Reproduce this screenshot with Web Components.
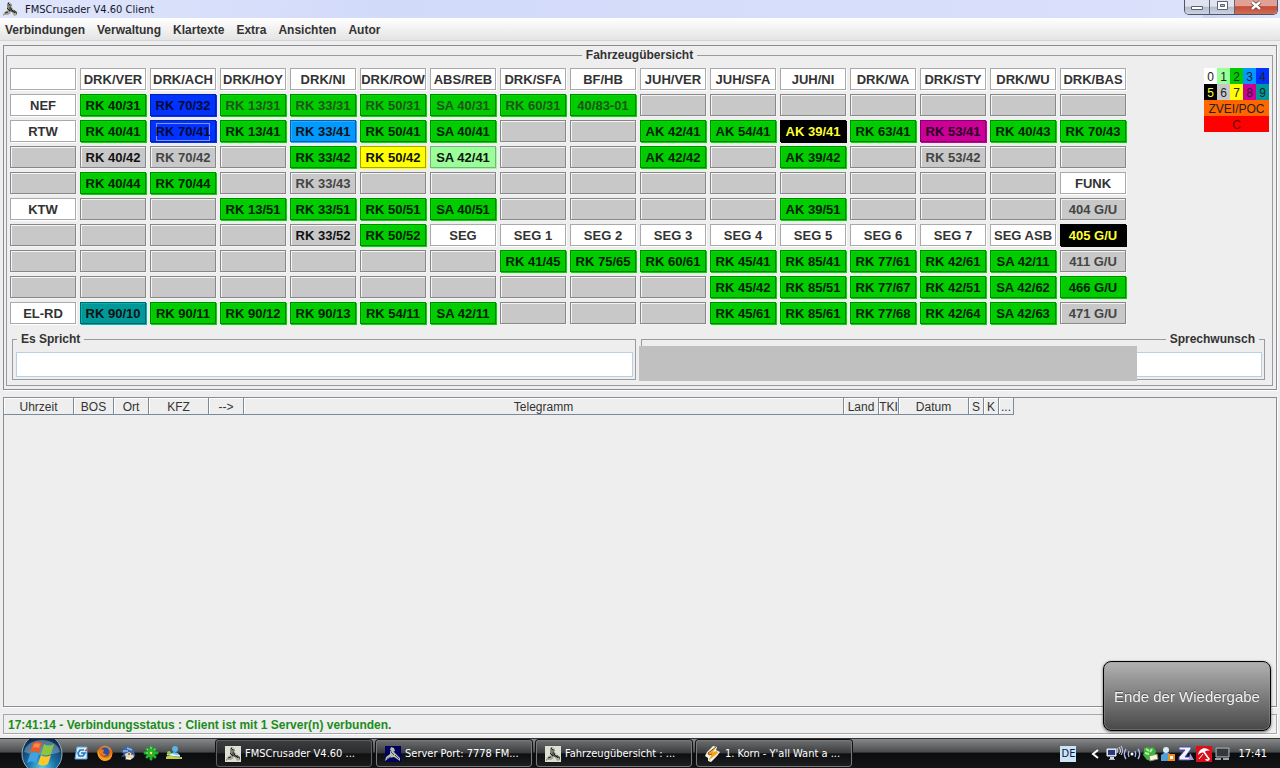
<!DOCTYPE html>
<html lang="de">
<head>
<meta charset="utf-8">
<title>FMSCrusader V4.60 Client</title>
<style>
  html, body {
    height: 100%;
    margin: 0;
  }
  body {
    --ui-font: "Liberation Sans", Arial, sans-serif;
    --sys-font: "DejaVu Sans Condensed", "DejaVu Sans", sans-serif;
    --line: #8a8c94;
    display: flex;
    flex-direction: column;
    background: #eee;
    color: #333;
    font: bold 12px/14px var(--ui-font);
    overflow: hidden;
  }
  main {
    flex: 1;
    display: flex;
    flex-direction: column;
    gap: 7px;
    padding: 4px 3px;
    min-height: 0;
  }
</style>
</head>
<body>
  <title-bar>FMSCrusader V4.60 Client</title-bar>
  <menu-bar items="Verbindungen,Verwaltung,Klartexte,Extra,Ansichten,Autor"></menu-bar>
  <main>
    <vehicle-panel>
      <titled-pane caption="Fahrzeugübersicht" side="center">
        <vehicle-overview></vehicle-overview>
      </titled-pane>
    </vehicle-panel>
    <telegram-table></telegram-table>
    <status-line>17:41:14 - Verbindungsstatus : Client ist mit 1 Server(n) verbunden.</status-line>
  </main>
  <task-bar></task-bar>
  <playback-end>Ende der Wiedergabe</playback-end>

<script>
const crusader = `
  <path d="M6 1l3 1 1 3-2 1-3-2z" fill="#6f7266"/>
  <path d="M5 4l4 2 1 4-4 2-5 3 1-3 3-3z" fill="#83867a"/>
  <path d="M8 5l3 3 4 3v3l-4-2-4-3z" fill="#4c5044"/>
  <path d="M1 13l5-3 3 2-3 2H1zM10 11l4 1 1 2-3 1z" fill="#a5a89c"/>
  <path d="M6 2l2 2M5 7l3 3M9 8l4 4M3 12l3-1" stroke="#262820" fill="none"/>
  <path d="M7 2l2 1M4 10l2-1M10 8l2 1" stroke="#dadccf" fill="none"/>`;

const ICONS = {
  app: crusader,
  appLight: `<path d="M0 0h16v16H0z" fill="#dedfd5"/>` + crusader,
  appNavy: `<path d="M0 0h16v16H0z" fill="#00005e"/>
    <path d="M6 1l3 1 1 3-2 1-3-2zM5 5l4 1 6 6v3l-6-4-5 1-4 3 1-4 4-3z" fill="#b9bdb4"/>
    <path d="M6 6l3 3M10 9l4 4M2 13l4-2" stroke="#454d55" fill="none"/>`,
  winamp: `<path d="M8 0l4 1-1 3 4 2-3 4-6 6-3-1v-3L0 10l2-4z" fill="#f2f2f2"/>
    <path d="M11 1L3 7l1 2 3-1-4 7 10-8-1-2-4 1z" fill="#f3a51b"/><path d="M11 1L3 7l1 2 3-1" stroke="#8b5306" fill="none"/>`,
  mail: `<path d="M3 2h10v12H1z" fill="#d9edfb" stroke="#5ba8dc"/>
    <path d="M10 5H6L4 8l1 3h4l2-3H7" stroke="#2579bd" stroke-width="1.6" fill="none"/>
    <path d="M11 6l3-2" stroke="#d0442b" stroke-width="1.500"/>`,
  firefox: `<circle cx="8" cy="8" r="7.5" fill="#e76c12"/><circle cx="8" cy="7" r="4.5" fill="#2b4f9c"/>
    <path d="M1 4c1 6 3 9 8 9 4 0 6-3 6-7 1 6-2 10-7 10S-1 10 1 4z" fill="#f8a21e"/>
    <path d="M3 4l4 1-1 3 4 2-4 1-3-3z" fill="#f07a12"/><path d="M6 2c3-1 6 0 7 3" stroke="#7aa6dd" fill="none"/>`,
  bird: `<path d="M4 1l5 1 5 3 1 6-3 3-7 1 1-4-5 1 3-3-4-3 4-1z" fill="#3a68a8"/>
    <path d="M5 9l4-2 4 2 1 3-4 3-4-1z" fill="#ead6b4"/><path d="M7 3l5 2M3 6l5 0" stroke="#92bce6" stroke-width="1.500"/>
    <path d="M9 8v2M12 8v2" stroke="#222"/><path d="M6 13l5 1" stroke="#fff"/>`,
  flower: `<g stroke="#23b529" stroke-width="3" stroke-linecap="round"><path d="M8 2v3M8 11v3M2 8h3M11 8h3M4 4l2 2M10 10l2 2M12 4l-2 2M4 12l2-2"/></g>
    <g stroke="#9bf08d"><path d="M8 2v2M3 8h2M4 4l1 1M12 4l-1 1"/></g><circle cx="8" cy="8" r="1.500" fill="#f5e27a"/>`,
  msn: `<circle cx="9" cy="4" r="3" fill="#56b4e8"/><path d="M3 12c0-6 10-6 11-1z" fill="#6ec4ee"/>
    <path d="M0 12c4-4 8 1 16 0v2H0z" fill="#c5cf45"/><path d="M1 10c3-3 8 2 13 1" stroke="#e9f6fd" stroke-width="1.500" fill="none"/>
    <circle cx="3" cy="8" r="2" fill="#8fca4e"/>`,
  net: `<path d="M1 3h9v7H1z" fill="#b7c9ee" stroke="#f1f4fb"/><path d="M2 4h7v5H2z" fill="#273b78"/>
    <path d="M4 11h4v2H4z" fill="#cfd6e6"/><path d="M3 13h6v1H3z" fill="#a9b5d0"/>
    <path d="M11 2c1 2 1 3 0 5M13 1c2 3 2 5 0 7M15 0c2 3 2 6 0 9" stroke="#dde5f7" fill="none"/>`,
  wifi: `<circle cx="8" cy="8" r="1.500" fill="#fff"/>
    <path d="M5 5c-1 2-1 4 0 6M11 5c1 2 1 4 0 6M2 3c-2 3-2 7 0 10M14 3c2 3 2 7 0 10" stroke="#a9b6f0" stroke-width="1.400" fill="none"/>`,
  agent: `<path d="M2 2l4-1 2 1 3-1 3 4-1 4 1 2-4 4-5-1-4-5 1-3z" fill="#3db53a"/><path d="M4 3l3 2M3 7l4 1M10 3L8 6" stroke="#b7f0a3" stroke-width="2"/>
    <path d="M7 10l8-2 1 5-8 2z" fill="#f5f5e8" stroke="#829060"/>`,
  user: `<circle cx="6" cy="4" r="3" fill="#d8edfb"/><path d="M1 15V9l3-2h5l3 3v5z" fill="#529fd8"/>
    <path d="M8 8h7v7H8z" fill="#f18b19"/><path d="M10 10h3v3h-3z" fill="#fff"/>`,
  zone: `<path d="M1 1h12v2L7 11h5v3H1v-3l6-7H1z" fill="#f3f3fb" stroke="#4a4ab8"/><path d="M12 7l4 7h-5z" fill="#9d9dd8"/>`,
  avira: `<path d="M0 0h16v16H0z" fill="#d9101b"/><path d="M2 9C3 2 10 0 14 5c-3-1-5 0-6 2-2-1-4 0-6 2z" fill="#fff"/>
    <path d="M8 6l5 7c-1 2-3 1-3 0" stroke="#fff" stroke-width="1.6" fill="none"/><path d="M3 13l4-5" stroke="#fff"/>`,
  screens: `<path d="M2 2h13v9H2z" fill="#55585c" stroke="#a8abaf"/><path d="M3 3h11v7H3z" fill="#34373b"/>
    <path d="M1 13h6M9 13h6" stroke="#d0d2d5" stroke-width="1.500"/>`,
  chevron: `<path d="M10 4L5 8l5 4" stroke="#fff" stroke-width="2" fill="none"/>`
};

class FmsElement extends HTMLElement {
  constructor() {
    super();
    this.attachShadow({ mode: "open" });
  }

  connectedCallback() {
    this.shadowRoot.innerHTML = this.render();
  }
}

class FmsIcon extends FmsElement {
  render() {
    return `
      <style>
        :host { display: block; width: 16px; height: 16px; flex: none; }
        svg { display: block; width: 100%; height: 100%; overflow: visible; }
      </style>
      <svg viewBox="0 0 16 16" aria-hidden="true">${ICONS[this.getAttribute("name")]}</svg>
    `;
  }
}

class TitleBar extends FmsElement {
  render() {
    return `
      <style>
        :host {
          display: flex;
          align-items: center;
          gap: 7px;
          height: 18px;
          padding: 0 2px;
          background: linear-gradient(100deg, #dfe6fb 0%, #d2dafa 30%, #dbe1fb 94%, #c8d4f4 94%, #dde7fb 100%);
          color: #15152a;
          font: 11px/16px var(--sys-font);
        }
        .title { flex: 1; padding-top: 2px; }
        .buttons {
          display: flex;
          align-self: flex-start;
          height: 15px;
          box-sizing: border-box;
          border: 1px solid #4e5566;
          border-top: 0;
          border-radius: 0 0 5px 5px;
          overflow: hidden;
        }
        button {
          display: flex;
          justify-content: center;
          width: 25px;
          padding: 0;
          border: 0;
          border-right: 1px solid #5d6577;
          background: linear-gradient(#dfe4f0 45%, #b5bccc 50%, #cbd2e2);
        }
        .close {
          width: 42px;
          border: 0;
          background: linear-gradient(#e0a095 40%, #c44b38 48%, #cf6e55);
        }
        svg { width: 14px; height: 14px; }
      </style>
      <fms-icon name="app"></fms-icon>
      <span class="title"><slot></slot></span>
      <div class="buttons">
        <button aria-label="Minimieren"><svg viewBox="0 0 14 14"><path d="M1.500 6.500h11v3h-11z" fill="#fff" stroke="#5b6170"/></svg></button>
        <button aria-label="Maximieren"><svg viewBox="0 0 14 14"><path d="M2.500 1.500h10v8h-10z" fill="#fff" stroke="#5b6170"/><path d="M5.500 4.500h4v2h-4z" fill="#b5bccc" stroke="#5b6170"/></svg></button>
        <button class="close" aria-label="Schließen"><svg viewBox="0 0 14 14"><path d="M3 2l8 7M11 2l-8 7" stroke="#62362f" stroke-width="4"/><path d="M3 2l8 7M11 2l-8 7" stroke="#fff" stroke-width="2.500"/></svg></button>
      </div>
    `;
  }
}

class MenuBar extends FmsElement {
  render() {
    const items = this.getAttribute("items").split(",");
    return `
      <style>
        :host {
          display: block;
          background: linear-gradient(#fff, #e4e4e4);
          border-bottom: 1px solid #d4d4d4;
        }
        nav { display: flex; gap: 12px; padding: 2px 5px 0; }
        button {
          padding: 0;
          border: 0;
          background: none;
          color: inherit;
          font: inherit;
          line-height: 20px;
        }
      </style>
      <nav>${items.map(item => `<button>${item}</button>`).join("")}</nav>
    `;
  }
}

class VehiclePanel extends FmsElement {
  render() {
    return `
      <style>
        :host {
          display: block;
          padding: 2px 3px 3px 2px;
          border: 1px solid var(--line);
          box-shadow: 1px 1px 0 #fff;
        }
      </style>
      <slot></slot>
    `;
  }
}

class TitledPane extends FmsElement {
  render() {
    return `
      <style>
        :host { display: block; }
        fieldset {
          min-width: 0;
          margin: 0;
          padding: 6px 3px 5px;
          border: 1px solid #999ba1;
        }
        :host([compact]) fieldset { padding: 6px 2px 2px 3px; }
        legend { padding: 0 4px; margin: 0 auto 0 1px; background: #eee; }
        :host([side="center"]) legend { margin: 0 auto; }
        :host([side="right"]) legend { margin: 0 3px 0 auto; }
      </style>
      <fieldset>
        <legend>${this.getAttribute("caption")}</legend>
        <slot></slot>
      </fieldset>
    `;
  }
}

// "L" is a heading, a digit is the FMS status, "d" marks a disabled vehicle,
// "f" the focused one. An empty string is an unused slot.
const row = line => line.split(",").map(s => s.trim());
const VEHICLES = [
  row("L:, L:DRK/VER, L:DRK/ACH, L:DRK/HOY, L:DRK/NI, L:DRK/ROW, L:ABS/REB, L:DRK/SFA, L:BF/HB, L:JUH/VER, L:JUH/SFA, L:JUH/NI, L:DRK/WA, L:DRK/STY, L:DRK/WU, L:DRK/BAS"),
  row("L:NEF, 2:RK 40/31, 4:RK 70/32, 2d:RK 13/31, 2d:RK 33/31, 2d:RK 50/31, 2d:SA 40/31, 2d:RK 60/31, 2d:40/83-01,,,,,,,"),
  row("L:RTW, 2:RK 40/41, 4f:RK 70/41, 2:RK 13/41, 3:RK 33/41, 2:RK 50/41, 2:SA 40/41,,, 2:AK 42/41, 2:AK 54/41, 5:AK 39/41, 2:RK 63/41, 8:RK 53/41, 2:RK 40/43, 2:RK 70/43"),
  row(", 6:RK 40/42, 6d:RK 70/42,, 2:RK 33/42, 7:RK 50/42, 1:SA 42/41,,, 2:AK 42/42,, 2:AK 39/42,, 6d:RK 53/42,,"),
  row(", 2:RK 40/44, 2:RK 70/44,, 6d:RK 33/43,,,,,,,,,,, L:FUNK"),
  row("L:KTW,,, 2:RK 13/51, 2:RK 33/51, 2:RK 50/51, 2:SA 40/51,,,,, 2:AK 39/51,,,, 6d:404 G/U"),
  row(",,,, 6:RK 33/52, 2:RK 50/52, L:SEG, L:SEG 1, L:SEG 2, L:SEG 3, L:SEG 4, L:SEG 5, L:SEG 6, L:SEG 7, L:SEG ASB, 5:405 G/U"),
  row(",,,,,,, 2:RK 41/45, 2:RK 75/65, 2:RK 60/61, 2:RK 45/41, 2:RK 85/41, 2:RK 77/61, 2:RK 42/61, 2:SA 42/11, 6d:411 G/U"),
  row(",,,,,,,,,, 2:RK 45/42, 2:RK 85/51, 2:RK 77/67, 2:RK 42/51, 2:SA 42/62, 2:466 G/U"),
  row("L:EL-RD, 9:RK 90/10, 2:RK 90/11, 2:RK 90/12, 2:RK 90/13, 2:RK 54/11, 2:SA 42/11,,,, 2:RK 45/61, 2:RK 85/61, 2:RK 77/68, 2:RK 42/64, 2:SA 42/63, 6d:471 G/U")
];

class VehicleCell extends FmsElement {
  render() {
    const status = this.getAttribute("status");
    const tag = status == "L" ? "span" : "button";
    const disabled = this.hasAttribute("dim") && tag == "button" ? "disabled" : "";
    return `
      <style>
        :host {
          --fill: #c8c8c8;
          --edge: #888;
          --light: #f4f4f4;
          --ink: #111;
          display: block;
        }
        :host([status="L"]) { --fill: #fff; --edge: #aaa; --light: #fff; --ink: #333; }
        :host([status="1"]) { --fill: #99ff99; --edge: #7fae7f; --light: #99ff99; }
        :host([status="2"]) { --fill: #00cc00; --edge: #008a00; --light: #00d800; --ink: #001c00; }
        :host([status="3"]) { --fill: #0099ff; --edge: #0065ad; --light: #2aa9ff; }
        :host([status="4"]) { --fill: #0033ff; --edge: #0022a8; --light: #0033ff; --ink: #000a33; }
        :host([status="5"]) { --fill: #000; --edge: #000; --light: #000; --ink: #ffff33; }
        :host([status="7"]) { --fill: #ffff00; --edge: #a5a500; --light: #ffff00; }
        :host([status="8"]) { --fill: #cc0099; --edge: #8a0068; --light: #cc0099; --ink: #26001c; }
        :host([status="9"]) { --fill: #009999; --edge: #006868; --light: #00b4b4; }
        :host([dim]) { --ink: #444; }
        :host([dim][status="2"]) { --ink: #1f551a; }
        .cell {
          display: flex;
          align-items: center;
          justify-content: center;
          box-sizing: border-box;
          width: 100%;
          height: 22px;
          padding: 2px 0 0;
          border: 1px solid var(--edge);
          background: var(--fill);
          box-shadow: 1px 1px 0 var(--light), inset 1px 1px 0 var(--light);
          color: var(--ink);
          font: bold 13px/18px var(--ui-font);
          white-space: nowrap;
        }
        .focus { box-shadow: inset 0 0 0 1px #7d93ff; }
      </style>
      <${tag} class="cell" ${disabled}><span class="${this.hasAttribute("focused") ? "focus" : ""}"><slot></slot></span></${tag}>
    `;
  }
}

class StatusLegend extends FmsElement {
  render() {
    const colors = ["#fff", "#99ff99", "#00cc00", "#0099ff", "#0033ff", "#000", "#c8c8c8", "#ffff00", "#cc0099", "#009999"];
    return `
      <style>
        :host {
          display: grid;
          grid-template-columns: repeat(5, 13px);
          grid-auto-rows: 16px;
          align-content: start;
          color: #222;
          font: 12px/18px var(--ui-font);
          text-align: center;
        }
        .wide { grid-column: 1 / -1; }
        .zvei { background: #ff6600; }
        .c { background: #ff0000; color: #600; }
        .s5 { color: #ffff33; }
      </style>
      ${colors.map((c, i) => `<span class="s${i}" style="background:${c}">${i}</span>`).join("")}
      <span class="wide zvei">ZVEI/POC</span>
      <span class="wide c">C</span>
    `;
  }
}

class VehicleOverview extends FmsElement {
  cell(text) {
    const [flags, name = ""] = text.split(":");
    return `<vehicle-cell status="${flags[0] || ""}" ${flags[1] == "d" ? "dim" : ""} ${flags[1] == "f" ? "focused" : ""}>${name}</vehicle-cell>`;
  }

  render() {
    return `
      <style>
        :host { display: block; }
        .top { display: flex; justify-content: space-between; }
        .grid {
          display: grid;
          grid-template-columns: repeat(16, 66px);
          gap: 4px;
        }
        .talk {
          position: relative;
          display: grid;
          grid-template-columns: 1fr 1fr;
          gap: 5px;
          margin: 8px 4px 0 2px;
        }
        input {
          display: block;
          box-sizing: border-box;
          width: 100%;
          height: 25px;
          padding: 0 4px;
          border: 1px solid #b8cfe5;
          background: #fff;
          font: inherit;
        }
        .cover {
          position: absolute;
          left: 50%;
          top: 14px;
          width: 498px;
          height: 35px;
          background: #c0c0c0;
        }
      </style>
      <div class="top">
        <div class="grid">${VEHICLES.flat().map(this.cell).join("")}</div>
        <status-legend></status-legend>
      </div>
      <div class="talk">
        <titled-pane compact caption="Es Spricht"><input aria-label="Es Spricht" readonly></titled-pane>
        <titled-pane compact caption="Sprechwunsch" side="right"><input aria-label="Sprechwunsch" readonly></titled-pane>
        <div class="cover"></div>
      </div>
    `;
  }
}

class TelegramTable extends FmsElement {
  render() {
    const columns = [
      ["Uhrzeit", 70], ["BOS", 40], ["Ort", 35], ["KFZ", 60], ["--&gt;", 35], ["Telegramm", 600],
      ["Land", 35], ["TKI", 20], ["Datum", 70], ["S", 15], ["K", 15], ["...", 15]
    ];
    return `
      <style>
        :host {
          flex: 1;
          display: block;
          border: 1px solid var(--line);
          box-shadow: 1px 1px 0 #fff;
          min-height: 0;
        }
        table {
          width: 1010px;
          table-layout: fixed;
          border-collapse: separate;
          border-spacing: 0;
        }
        th {
          padding: 2px 0 0;
          border: solid #7a8a99;
          border-width: 0 1px 1px 0;
          box-shadow: inset 1px 1px 0 #fff;
          font: 12px/14px var(--ui-font);
          white-space: nowrap;
          overflow: hidden;
        }
      </style>
      <table>
        <colgroup>${columns.map(c => `<col style="width:${c[1]}px">`).join("")}</colgroup>
        <thead><tr>${columns.map(c => `<th scope="col">${c[0]}</th>`).join("")}</tr></thead>
        <tbody></tbody>
      </table>
    `;
  }
}

class StatusLine extends FmsElement {
  render() {
    return `
      <style>
        :host {
          display: block;
          padding: 2px 4px 0;
          border: 1px solid #a5a7ac;
          box-shadow: 1px 1px 0 #fff;
          color: #1b8c1b;
          line-height: 16px;
        }
      </style>
      <slot></slot>
    `;
  }
}

class TaskButton extends FmsElement {
  render() {
    return `
      <style>
        :host { display: block; width: 156px; }
        button {
          display: flex;
          align-items: center;
          gap: 4px;
          width: 100%;
          height: 27px;
          padding: 0 8px;
          border: 1px solid #77797b;
          border-radius: 3px;
          background: linear-gradient(#6a6c6e, #3b3d3f 46%, #0e0f10 52%, #1d1e20);
          box-shadow: 0 0 0 1px #111;
          color: #fff;
          font: 11px/16px var(--sys-font);
          white-space: nowrap;
        }
        :host([active]) button { background: linear-gradient(#3c3d3f, #2b2c2d 46%, #111 52%, #1b1b1b); border-color: #5d5f61; }
      </style>
      <button><fms-icon name="${this.getAttribute("icon")}"></fms-icon><slot></slot></button>
    `;
  }
}

class TaskBar extends FmsElement {
  render() {
    const launch = { mail: "Mail", firefox: "Firefox", bird: "Thunderbird", flower: "ICQ", msn: "Messenger" };
    const tray = ["net", "wifi", "agent", "user", "zone", "avira", "screens"];
    return `
      <style>
        :host {
          display: flex;
          align-items: center;
          height: 30px;
          box-sizing: border-box;
          border-top: 1px solid #333;
          background: linear-gradient(#858789, #4b4d4f 44%, #0b0c0d 50%, #141516);
          color: #fff;
          font: 11px/16px var(--sys-font);
        }
        button { padding: 0; border: 0; background: none; }
        .start { width: 42px; height: 30px; margin-left: 21px; overflow: hidden; }
        .start svg { display: block; width: 42px; height: 30px; }
        .launch { display: flex; gap: 7px; margin-left: 11px; padding-bottom: 2px; }
        .tasks { display: flex; gap: 4px; margin-left: 34px; }
        .tray { display: flex; align-items: center; gap: 2px; margin: 0 13px 0 auto; }
        .lang { width: 16px; margin-right: 10px; background: #cbe4f7; color: #0a1a3a; text-align: center; }
        .clock { margin-left: 6px; }
      </style>
      <button class="start" aria-label="Start">
        <svg viewBox="0 0 42 30">
          <defs>
            <radialGradient id="orb" cx="50%" cy="85%" r="80%">
              <stop offset="0" stop-color="#4fd3ee"/><stop offset=".45" stop-color="#1b6ea6"/><stop offset="1" stop-color="#0c2546"/>
            </radialGradient>
          </defs>
          <circle cx="21" cy="15" r="20" fill="url(#orb)" stroke="#9aaebb"/>
          <path d="M3 13C6-3 36-3 39 13c-10 4-26 4-36 0z" fill="#cfe2ee" opacity=".35"/>
          <path d="M12 4c3-2 6-2 9 0l-3 10c-3-2-6-2-9 0z" fill="#ee5a22"/>
          <path d="M23 5c3 2 6 2 10 0l-3 10c-4 2-7 2-10 0z" fill="#8ac63f"/>
          <path d="M9 15c3-2 6-2 9 0l-3 9c-3-2-6-2-9 0z" fill="#3ea3e6"/>
          <path d="M20 16c3 2 6 2 10 0l-3 9c-4 2-7 2-10 0z" fill="#fcc829"/>
          <path d="M13 5c2-1 4-1 6 0l-1 4c-2-1-4-1-6 0z" fill="#f9a77a" opacity=".6"/>
        </svg>
      </button>
      <div class="launch">
        ${Object.keys(launch).map(name => `<button aria-label="${launch[name]}"><fms-icon name="${name}"></fms-icon></button>`).join("")}
      </div>
      <div class="tasks">
        <task-button icon="appLight" active>FMSCrusader V4.60 ...</task-button>
        <task-button icon="appNavy">Server Port: 7778 FM...</task-button>
        <task-button icon="appLight">Fahrzeugübersicht : ...</task-button>
        <task-button icon="winamp">1. Korn - Y'all Want a ...</task-button>
      </div>
      <div class="tray">
        <span class="lang">DE</span>
        <fms-icon name="chevron"></fms-icon>
        ${tray.map(name => `<fms-icon name="${name}"></fms-icon>`).join("")}
        <span class="clock">17:41</span>
      </div>
    `;
  }
}

class PlaybackEnd extends FmsElement {
  render() {
    return `
      <style>
        :host { position: fixed; right: 9px; bottom: 37px; }
        button {
          display: block;
          width: 168px;
          height: 70px;
          padding: 2px 0 0;
          border: 1px solid #000;
          border-radius: 8px;
          background: linear-gradient(#b2b2b2, #7d7d7d 50%, #484848);
          box-shadow: inset 0 0 0 1px #9a9a9a66, 0 1px 3px #0009;
          color: #f2f2f2;
          font: 15px/20px var(--ui-font);
          text-shadow: 0 -1px 1px #0006;
          white-space: nowrap;
        }
      </style>
      <button><slot></slot></button>
    `;
  }
}

customElements.define("fms-icon", FmsIcon);
customElements.define("title-bar", TitleBar);
customElements.define("menu-bar", MenuBar);
customElements.define("vehicle-panel", VehiclePanel);
customElements.define("titled-pane", TitledPane);
customElements.define("vehicle-cell", VehicleCell);
customElements.define("status-legend", StatusLegend);
customElements.define("vehicle-overview", VehicleOverview);
customElements.define("telegram-table", TelegramTable);
customElements.define("status-line", StatusLine);
customElements.define("task-button", TaskButton);
customElements.define("task-bar", TaskBar);
customElements.define("playback-end", PlaybackEnd);
</script>
</body>
</html>
